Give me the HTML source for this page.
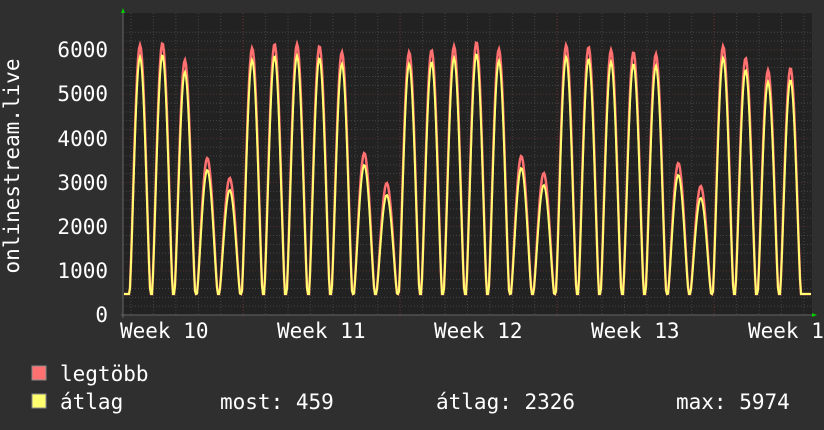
<!DOCTYPE html>
<html><head><meta charset="utf-8"><style>
html,body{margin:0;padding:0;background:#2f2f2f;}
svg{display:block}
text{font-family:"DejaVu Sans Mono","Liberation Mono",monospace;fill:#fff;font-size:21px}
</style></head><body>
<svg id="g" width="824" height="430" xmlns="http://www.w3.org/2000/svg">
<rect width="824" height="430" fill="#2f2f2f"/>
<rect x="123" y="13" width="689" height="302" fill="#222"/>
<g id="grid"></g>
<path id="pr" fill="none" stroke="#ff7070" stroke-width="2.5"/>
<path id="py" fill="none" stroke="#ffff70" stroke-width="2"/>
<line x1="121" y1="315" x2="814" y2="315" stroke="#666"/>
<line x1="123" y1="10" x2="123" y2="318" stroke="#666"/>
<polygon points="121,13 125,13 123,8" fill="#0c0"/>
<polygon points="812,313 812,317 817,315" fill="#0c0"/>
<text x="108" y="57" text-anchor="end">6000</text>
<text x="108" y="101" text-anchor="end">5000</text>
<text x="108" y="146" text-anchor="end">4000</text>
<text x="108" y="190" text-anchor="end">3000</text>
<text x="108" y="234" text-anchor="end">2000</text>
<text x="108" y="278" text-anchor="end">1000</text>
<text x="108" y="322" text-anchor="end">0</text>
<text transform="translate(19,166) rotate(-90)" text-anchor="middle">onlinestream.live</text>
<text x="120" y="338">Week 10</text>
<text x="277" y="338">Week 11</text>
<text x="434" y="338">Week 12</text>
<text x="591" y="338">Week 13</text>
<text x="748" y="338">Week 1</text>
<rect x="32" y="366" width="14" height="14" fill="#ff7070" stroke="#888"/>
<rect x="32" y="394" width="14" height="14" fill="#ffff70" stroke="#888"/>
<text x="60" y="381">legtöbb</text>
<text x="60" y="409">átlag</text>
<text x="220" y="409">most: 459</text>
<text x="436" y="409">átlag: 2326</text>
<text x="676" y="409">max: 5974</text>
</svg>
<script>
var ns="http://www.w3.org/2000/svg",g=document.getElementById('grid');
function ln(x1,y1,x2,y2,c,d){var l=document.createElementNS(ns,'line');l.setAttribute('x1',x1);l.setAttribute('y1',y1);l.setAttribute('x2',x2);l.setAttribute('y2',y2);l.setAttribute('stroke',c);l.setAttribute('stroke-width',1);if(d)l.setAttribute('stroke-dasharray',d);g.appendChild(l);}
var k=44.17;
for(var v=200;v<=6400;v+=200){var y=315-v*k/1000;if(y<13)break;ln(123,y,812,y,v%1000==0?'#5a2e2e':'#444','1,2');}
var d=22.43;
for(var x=131;x<812;x+=d){ln(x,13,x,315,'#444','1,2');}
for(var x=243;x<812;x+=157){ln(x,13,x,318,'#6a2e2e','1,2');}
var peaks=[45,43,60,158,178,48,44,44,46,52,153,183,52,50,46,42,49,156,173,45,47,50,52,54,163,186,46,58,70,68];
var x0=140;
function build(off){var s='';for(var x=124;x<=811;x++){var i=Math.round((x-x0)/d);if(i<0)i=0;if(i>=peaks.length)i=peaks.length-1;var c=x0+i*d;var t=(x-c)/d;var base=294;var top=peaks[i]+off;var w=Math.pow(Math.max(0,Math.cos(Math.PI*t*1.08)),1.3);var y=base-(base-top)*w;s+=(s?'L':'M')+x+','+y.toFixed(1);}return s;}
document.getElementById('pr').setAttribute('d',build(0));
document.getElementById('py').setAttribute('d',build(12));
</script>
</body></html>
